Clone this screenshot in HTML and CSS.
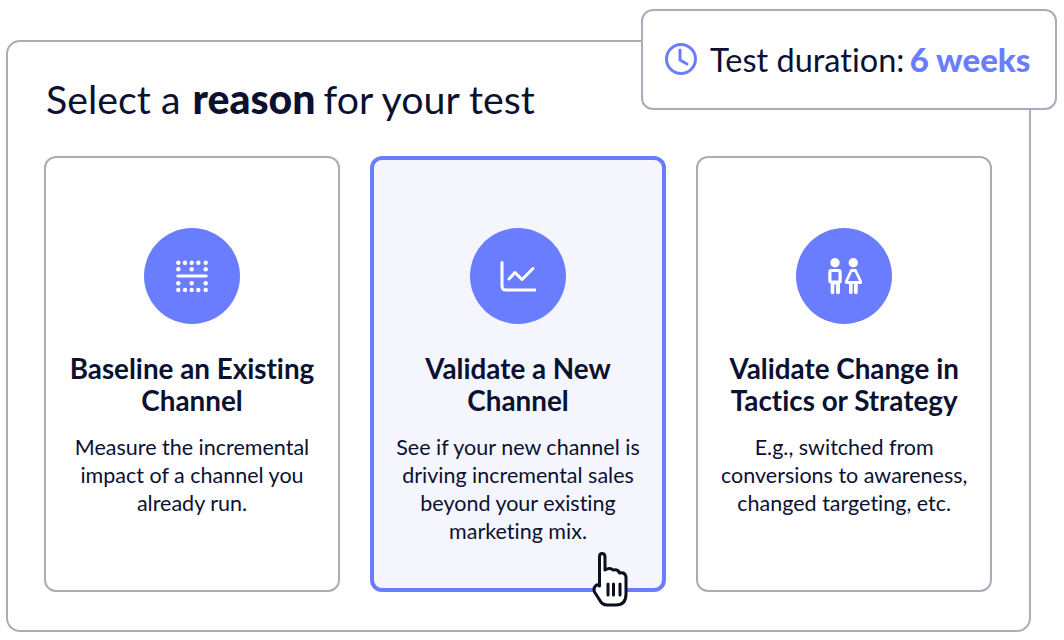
FILE: index.html
```html
<!DOCTYPE html>
<html lang="en">
<head>
    <meta charset="UTF-8">
    <meta name="viewport" content="width=device-width, initial-scale=1.0">
    <title>Select a reason for your test</title>
    <link rel="stylesheet" href="styles.css">
</head>
<body>
    <div class="panel">
        <h1 class="panel-title">Select a <strong>reason</strong> for your test</h1>

        <div class="cards">
            <div class="card">
                <div class="card-icon">
                    <svg width="36" height="36" viewBox="0 0 36 36" fill="#fff">
                        <circle cx="4.300" cy="4.700" r="2.200"/><circle cx="11" cy="4.700" r="2.200"/><circle cx="17.700" cy="4.700" r="2.200"/><circle cx="24.300" cy="4.700" r="2.200"/><circle cx="31.700" cy="4.700" r="2.200"/>
                        <circle cx="4.300" cy="11.300" r="2.200"/><circle cx="17.700" cy="11.300" r="2.200"/><circle cx="31.700" cy="11.300" r="2.200"/>
                        <rect x="2.300" y="16.500" width="31.400" height="3" rx="1.500"/>
                        <circle cx="4.300" cy="25.300" r="2.200"/><circle cx="17.700" cy="25.300" r="2.200"/><circle cx="31.700" cy="25.300" r="2.200"/>
                        <circle cx="4.300" cy="32" r="2.200"/><circle cx="11" cy="32" r="2.200"/><circle cx="17.700" cy="32" r="2.200"/><circle cx="24.300" cy="32" r="2.200"/><circle cx="31.700" cy="32" r="2.200"/>
                    </svg>
                </div>
                <h2 class="card-title">Baseline an Existing Channel</h2>
                <p class="card-text">Measure the incremental impact of a channel you already run.</p>
            </div>

            <div class="card card-selected">
                <div class="card-icon">
                    <svg width="36" height="36" viewBox="0 0 36 36" fill="none" stroke="#fff" stroke-width="3" stroke-linecap="round" stroke-linejoin="round">
                        <path d="M2 4.500V28Q2 32 6 32H35"/>
                        <path d="M9 21L15 14.500L22 21.500L33 10.500"/>
                    </svg>
                </div>
                <h2 class="card-title">Validate a New Channel</h2>
                <p class="card-text">See if your new channel is driving incremental sales beyond your existing marketing mix.</p>
                <svg class="cursor" width="36" height="56" viewBox="0 0 36 56" fill="#fff" stroke="#0b0f1e" stroke-width="3" stroke-linecap="round" stroke-linejoin="round">
                    <path d="M7.500 34V5Q7.500 1.500 10 1.500Q13 1.500 13 5V18Q18 15 21 18Q26 17 27.500 21Q33 20 34 25V42Q34 53 24 53H15Q10 53 7 47L2.500 40Q1 36 4 33.500Q6 32 7.500 34Z"/>
                    <path d="M16 32V43M21.500 32V43M28 32V43" fill="none"/>
                </svg>
            </div>

            <div class="card">
                <div class="card-icon">
                    <svg width="36" height="40" viewBox="0 0 36 40" fill="#fff">
                        <circle cx="9" cy="6.700" r="4.700"/>
                        <circle cx="27.300" cy="6.700" r="4.700"/>
                        <path d="M5.300 13H12.700Q15.700 13 15.700 16V25Q15.700 27.500 14 27.500V36.500Q14 38.300 12 38.300T10 36.500V28.500H8.300V36.500Q8.300 38.300 6.500 38.300T4.700 36.500V27.500Q2.300 27.500 2.300 25V16Q2.300 13 5.300 13ZM5.500 16V24.500H12.500V16Z" fill-rule="evenodd"/>
                        <path d="M24.500 13H30.200L36 25Q37 28 34 28H31.700V36.500Q31.700 38.300 29.850 38.300T28 36.500V28H26.700V36.500Q26.700 38.300 24.850 38.300T23 36.500V28H21Q18 28 19 25ZM26 16L22 25H33L28.700 16Z" fill-rule="evenodd"/>
                    </svg>
                </div>
                <h2 class="card-title">Validate Change in Tactics or Strategy</h2>
                <p class="card-text">E.g., switched from conversions to awareness, changed targeting, etc.</p>
            </div>
        </div>

        <div class="duration">
            <svg width="34" height="34" viewBox="0 0 34 34" fill="none" stroke="#6b7dff" stroke-width="3" stroke-linecap="round" stroke-linejoin="round">
                <circle cx="17" cy="17" r="14.500"/>
                <path d="M16 8V18L23 22"/>
            </svg>
            <span>Test duration: <strong>6 weeks</strong></span>
        </div>
    </div>
</body>
</html>
```

FILE: styles.css
```css
body {
    margin: 0;
    background-color: white;
    font-family: 'Lato', 'Liberation Sans', sans-serif;
    font-variant-ligatures: none;
    color: #0b1130;
}

.panel {
    position: relative;
    box-sizing: border-box;
    width: 1025px;
    height: 592px;
    margin: 40px 0 0 6px;
    padding: 35px 36px 38px;
    border: 2px solid #a8adb9;
    border-radius: 14px;
}

.panel-title {
    margin: 0 0 35px 2px;
    font-size: 39.300px;
    line-height: 44px;
    font-weight: 400;
}

.panel-title strong {
    margin-left: 2px;
    margin-right: -2px;
    font-weight: 900;
    font-size: 41px;
}

.cards {
    display: grid;
    grid-template-columns: 296px 296px 296.400px;
    gap: 30px;
}

.card {
    position: relative;
    box-sizing: border-box;
    height: 436px;
    padding: 70px 20px 0;
    border: 2px solid #a8adb9;
    border-radius: 12px;
    text-align: center;
}

.card-selected {
    background-color: #f4f5fd;
    border: 4px solid #6b7dff;
    padding: 68px 18px 0;
}

.card-icon {
    display: flex;
    align-items: center;
    justify-content: center;
    width: 96px;
    height: 96px;
    margin: 0 auto 29px;
    border-radius: 50%;
    background-color: #6b7dff;
}

.card-title {
    margin: 0 0 16px;
    font-size: 27.800px;
    line-height: 32px;
    font-weight: 700;
}

.card-text {
    margin: 0;
    font-size: 21.500px;
    line-height: 28px;
}

.cursor {
    position: absolute;
    left: 218px;
    top: 392px;
}

.duration {
    position: absolute;
    top: -33px;
    right: -28px;
    display: flex;
    align-items: center;
    gap: 12px;
    box-sizing: border-box;
    width: 416px;
    height: 101px;
    padding: 0 0 1px 21px;
    border: 2px solid #a8adb9;
    border-radius: 12px;
    background-color: white;
    font-size: 32.500px;
}

.duration strong {
    margin-left: -3px;
    color: #6b7dff;
    font-weight: 900;
    font-size: 33px;
}
```
